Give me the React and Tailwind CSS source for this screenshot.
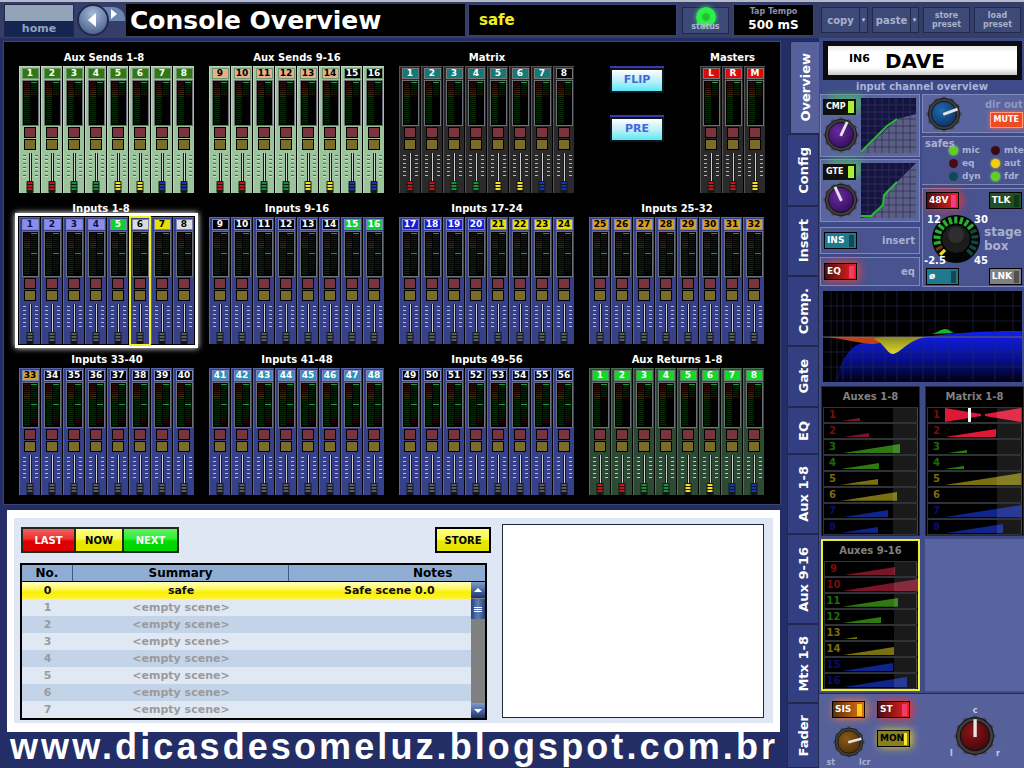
import { useId } from 'react'

const FONT = "font-['DejaVu_Sans',sans-serif]"

const LABELS = {
  green: 'bg-[#2f7a10] text-white',
  peach: 'bg-[#e8b088] text-black',
  black: 'bg-black text-white',
  teal: 'bg-[#117a7a] text-white',
  red: 'bg-[#dd0a0a] text-white',
  peri: 'bg-[#8c8cf0] text-[#101040]',
  lime: 'bg-[#10d030] text-white',
  white: 'bg-[#dcdcdc] text-black',
  yellow: 'bg-[#e8e000] text-black',
  navy: 'bg-[#1a1ad8] text-white',
  orange: 'bg-[#d8a020] text-black',
  sky: 'bg-[#2f8fb8] text-white',
  bright: 'bg-[#12d82c] text-white',
}

const THEMES = {
  green: { strip: 'bg-[#9cc49c] border-[#b8d8b8]', box: 'border-[#6f946f]', tick: 'bg-[repeating-linear-gradient(to_bottom,#4a6a4a_0,#4a6a4a_1px,#c8e0c8_1px,#c8e0c8_2px,transparent_2px,transparent_4px)]' },
  grey: { strip: 'bg-[#2a2a2a] border-[#555555]', box: 'border-[#777777]', tick: 'bg-[repeating-linear-gradient(to_bottom,#b8b8b8_0,#b8b8b8_1px,transparent_1px,transparent_4px)]' },
  blue: { strip: 'bg-[#36418a] border-[#5a65a8]', box: 'border-[#7a84c0]', tick: 'bg-[repeating-linear-gradient(to_bottom,#b0b8e8_0,#b0b8e8_1px,transparent_1px,transparent_4px)]' },
  dark: { strip: 'bg-[#2c4a34] border-[#4f7058]', box: 'border-[#5f8a68]', tick: 'bg-[repeating-linear-gradient(to_bottom,#b8c8b8_0,#b8c8b8_1px,transparent_1px,transparent_4px)]' },
}

const CAPS = {
  red: 'bg-[#c01818]',
  green: 'bg-[#14903a]',
  yellow: 'bg-[#f0e020]',
  blue: 'bg-[#1434b0]',
  none: 'bg-[#555b66]',
}

const SENDS = ['red', 'red', 'green', 'green', 'yellow', 'yellow', 'blue', 'blue']
const NONE = Array(8).fill('none')

function Strip({ label, color, theme, cap, input }) {
  const t = THEMES[theme]
  return (
    <div className={`flex h-[127px] w-[21px] flex-col items-center border-t border-l ${t.strip}`}>
      <div className={`mt-[1px] flex h-[11px] w-[17px] items-center justify-center border text-[9px] leading-none font-bold ${LABELS[color]} ${t.box}`}>
        {label}
      </div>
      <div className="mt-[1px] flex h-[46px] w-[17px] gap-px border border-[#6a6f7a] bg-black p-px">
        <div className="flex-1 bg-[repeating-linear-gradient(to_bottom,transparent_0,transparent_1px,rgba(0,0,0,.8)_1px,rgba(0,0,0,.8)_2px),linear-gradient(to_bottom,#2a0e0a_0,#2a0e0a_12%,#3e3010_32%,#082808_38%,#082808_100%)]" />
        {input ? (
          <div className="flex-1 bg-[linear-gradient(to_bottom,#20a038_0,#20a038_2%,transparent_2%),linear-gradient(to_bottom,transparent_47%,#20a038_47%,#20a038_50%,transparent_50%),repeating-linear-gradient(to_bottom,transparent_0,transparent_1px,rgba(0,0,0,.8)_1px,rgba(0,0,0,.8)_2px),linear-gradient(to_bottom,#061e0a_0,#061e0a_80%,#300a0a_84%,#000000_100%)]" />
        ) : (
          <div className="flex-1 bg-[linear-gradient(to_bottom,#20a038_0,#20a038_3%,transparent_3%),repeating-linear-gradient(to_bottom,transparent_0,transparent_1px,rgba(0,0,0,.8)_1px,rgba(0,0,0,.8)_2px),linear-gradient(to_bottom,#061e0a_0,#061e0a_26%,#301206_30%,#000000_36%,#000000_100%)]" />
        )}
      </div>
      <div className="mt-px h-[11px] w-[12px] border border-black bg-[#7a343c]" />
      <div className="mt-px h-[11px] w-[12px] border border-black bg-[#7c6c2a]" />
      <div className="relative mt-[3px] flex h-[38px] w-full justify-center gap-[3px]">
        <div className={`mt-[2px] h-[24px] w-[3px] ${t.tick}`} />
        <div className="h-full w-[3px] border-x border-[#1a1a1a] bg-[#d0d0d0]" />
        <div className={`mt-[2px] h-[24px] w-[3px] ${t.tick}`} />
        <div className="absolute bottom-[-2px] left-1/2 flex h-[12px] w-[7px] -translate-x-1/2 flex-col gap-px rounded-[1px] bg-[#161616] px-px py-[1px]">
          <div className={`h-[2px] w-full ${CAPS[cap]}`} />
          <div className={`h-[2px] w-full ${CAPS[cap]}`} />
          <div className={`h-[2px] w-full ${CAPS[cap]}`} />
        </div>
      </div>
    </div>
  )
}

function Group({ title, labels, colors, theme, caps, input, selected, titlePad = '' }) {
  return (
    <div className="relative">
      <div className={`mb-px h-[15px] text-center text-[10px] leading-[15px] font-bold text-white ${titlePad}`}>{title}</div>
      <div className="flex gap-px">
        {labels.map((l, i) => (
          <Strip key={l + title} label={l} color={colors[i]} theme={theme} cap={caps[i]} input={input} />
        ))}
      </div>
      {selected && (
        <>
          <div className="pointer-events-none absolute top-[12px] -right-[3px] -bottom-[4px] -left-[4px] border-[3px] border-white shadow-[0_0_6px_#ffffff]" />
          <div className="pointer-events-none absolute top-[15px] bottom-[-2px] left-[110px] w-[22px] border-2 border-[#f0f020]" />
        </>
      )}
    </div>
  )
}

const range = (from, to) => Array.from({ length: to - from + 1 }, (_, i) => String(from + i))
const fill = (c, n = 8) => Array(n).fill(c)

const GROUPS = [
  { title: 'Aux Sends 1-8', labels: range(1, 8), colors: fill('green'), theme: 'green', caps: SENDS, titlePad: 'pr-[6px]' },
  { title: 'Aux Sends 9-16', labels: range(9, 16), colors: [...fill('peach', 6), 'black', 'black'], theme: 'green', caps: SENDS },
  { title: 'Matrix', labels: range(1, 8), colors: [...fill('teal', 7), 'black'], theme: 'grey', caps: SENDS },
]

const INPUTS = [
  { title: 'Inputs 1-8', labels: range(1, 8), colors: [...fill('peri', 4), 'lime', 'white', 'yellow', 'white'], selected: true, titlePad: 'pr-[12px]' },
  { title: 'Inputs 9-16', labels: range(9, 16), colors: [...fill('black', 6), 'lime', 'lime'] },
  { title: 'Inputs 17-24', labels: range(17, 24), colors: [...fill('navy', 4), ...fill('yellow', 4)] },
  { title: 'Inputs 25-32', labels: range(25, 32), colors: fill('orange') },
  { title: 'Inputs 33-40', labels: range(33, 40), colors: ['orange', ...fill('black', 7)] },
  { title: 'Inputs 41-48', labels: range(41, 48), colors: fill('sky') },
  { title: 'Inputs 49-56', labels: range(49, 56), colors: fill('black') },
]

function GlossButton({ children }) {
  return (
    <button className="flex h-[25px] w-[54px] items-center justify-center border-2 border-[#10141c] bg-[linear-gradient(to_bottom,#ffffff_0,#d8f4fa_30%,#bff2f8_50%,#5ce8f4_100%)] text-[11px] font-bold text-[#3f68d8] shadow-[0_-2px_0_#3a38b0]">
      {children}
    </button>
  )
}

function TopButton({ children, split }) {
  return (
    <div className="flex h-[26px] w-[47px] border border-[#20284c] bg-[#3d4a78] text-[#a9b1c9]">
      <div className="flex flex-1 items-center justify-center text-center text-[8px] leading-[9px] font-bold">{children}</div>
      {split && (
        <div className="flex w-[8px] items-center justify-center border-l border-[#20284c] text-[7px] leading-none text-[#c0c6da]">▾</div>
      )}
    </div>
  )
}

function Tab({ label, h, active }) {
  return (
    <div
      className={`flex items-center justify-center rounded-tl-[2px] border border-[#20284c] ${h} ${active ? 'ml-[3px] border-r-0 bg-[#56619c]' : 'bg-[#333f80]'}`}
    >
      <span className="rotate-180 text-[13px] leading-none font-bold text-white [writing-mode:vertical-rl]">{label}</span>
    </div>
  )
}

function Knob({ size, color, dark, angle }) {
  const id = useId()
  const teeth = Array.from({ length: 12 }, (_, i) => i * 30)
  return (
    <svg width={size} height={size} viewBox="0 0 40 40" className="shrink-0">
      <defs>
        <radialGradient id={id} cx="0.4" cy="0.35" r="0.8">
          <stop offset="0" stopColor={color} />
          <stop offset="1" stopColor={dark} />
        </radialGradient>
      </defs>
      {teeth.map((a) => (
        <rect key={a} x="18" y="0.5" width="4" height="5" fill="#4a4a4c" transform={`rotate(${a} 20 20)`} />
      ))}
      <circle cx="20" cy="20" r="17.5" fill="#3e3e40" stroke="#151515" strokeWidth="1" />
      <circle cx="20" cy="20" r="14" fill={`url(#${id})`} stroke="#111111" strokeWidth="1" />
      <rect x="18.5" y="4" width="3.2" height="17" fill="#e4e4e4" transform={`rotate(${angle} 20 20)`} />
    </svg>
  )
}

function Toggle({ label, className, lamp, w = 'w-[33px]', text = 'text-white' }) {
  return (
    <div className={`relative flex h-[17px] ${w} items-center justify-between border border-black px-[2px] text-[9px] font-bold ${className} ${text}`}>
      <span className="leading-none">{label}</span>
      <span className={`h-[12px] w-[5px] ${lamp}`} />
    </div>
  )
}

function Curve({ gray, line }) {
  const lines = [7, 14, 21, 28, 35, 42, 49]
  return (
    <svg width="55" height="55" viewBox="0 0 55 55" className="shrink-0">
      <rect width="55" height="55" fill="#14143c" />
      <polygon points={gray} fill="#5c5f80" />
      {lines.map((v) => (
        <g key={v} stroke="#2e3068" strokeWidth="0.8">
          <line x1={v} y1="0" x2={v} y2="55" />
          <line x1="0" y1={v} x2="55" y2={v} />
        </g>
      ))}
      <polyline points={line} fill="none" stroke="#22c030" strokeWidth="2" />
    </svg>
  )
}

function DynPanel({ label, gray, line, angle }) {
  return (
    <div className="flex h-[63px] items-center gap-[2px] border border-[#7f88b8] bg-[#5a659f] pr-[3px] pl-[2px]">
      <div className="flex w-[36px] flex-col items-center gap-[2px]">
        <div className="flex h-[16px] w-[33px] items-center justify-between self-start bg-[#101010] pr-[2px] pl-[3px] text-[8px] font-bold text-white shadow-[6px_-4px_8px_rgba(60,240,60,.5)]">
          <span>{label}</span>
          <span className="h-[12px] w-[6px] bg-[#a8f030]" />
        </div>
        <Knob size={36} color="#6a2aa0" dark="#2a0a50" angle={angle} />
      </div>
      <Curve gray={gray} line={line} />
    </div>
  )
}

function Led({ className, label }) {
  return (
    <div className="flex items-center gap-[4px]">
      <span className={`h-[9px] w-[9px] rounded-full ${className}`} />
      <span className="text-[9px] leading-none font-bold text-[#aab2d2]">{label}</span>
    </div>
  )
}

function Dial() {
  const segs = Array.from({ length: 17 }, (_, i) => -135 + i * 16.8)
  return (
    <svg width="48" height="48" viewBox="0 0 48 48" className="shrink-0">
      <circle cx="24" cy="24" r="24" fill="#050505" />
      {segs.map((a, i) => (
        <rect
          key={a}
          x="22.4"
          y="1.5"
          width="3.2"
          height="7"
          fill={i === 0 ? '#e8d820' : i === 1 ? '#6a3a10' : i < 12 ? '#28b030' : '#0f4a3c'}
          transform={`rotate(${a} 24 24)`}
        />
      ))}
      <circle cx="24" cy="24" r="14.5" fill="#1c1c1c" stroke="#000000" />
      <circle cx="24" cy="20" r="8" fill="#2e2e2e" />
    </svg>
  )
}

const RED = { num: 'text-[#7a0c0c]', fill: '#7a1428' }
const GRN = { num: 'text-[#1a6a0e]', fill: '#2f7a10' }
const OLV = { num: 'text-[#7a6c10]', fill: '#7a7010' }
const BLU = { num: 'text-[#0c0c6a]', fill: '#10248a' }
const ROW_COLORS = [RED, RED, GRN, GRN, OLV, OLV, BLU, BLU]

function SendRow({ n, w, c, fill, bowtie }) {
  const h = Math.max(2, (w * 12) / 76)
  return (
    <div className="flex h-[16px] border border-[#30323a] bg-black">
      <div className={`w-[17px] shrink-0 text-center text-[10px] leading-[14px] font-bold ${c.num}`}>{n}</div>
      <div className="relative flex-1">
        {bowtie ? (
          <svg width="76" height="14" viewBox="0 0 76 14" className="absolute top-0 left-0">
            <polygon points="0,0 36,6 36,8 0,14" fill="#e01838" />
            <polygon points="76,0 40,6 40,8 76,14" fill="#e01838" />
            <rect x="23" y="0" width="3" height="14" fill="#ffffff" />
          </svg>
        ) : (
          w > 0 && (
            <svg width={w} height={h} className="absolute bottom-px left-0">
              <polygon points={`0,${h} ${w},0 ${w},${h}`} fill={fill || c.fill} />
            </svg>
          )
        )}
        <div className="absolute inset-y-0 left-[52px] w-[25px] bg-white/10" />
      </div>
    </div>
  )
}

function SendPanel({ title, values, start, className, bright }) {
  return (
    <div className={`flex flex-col bg-black px-px ${className}`}>
      <div className="h-[20px] text-center text-[10px] leading-[20px] font-bold text-[#808080]">{title}</div>
      {values.map((w, i) => (
        <SendRow key={i} n={start + i} w={w} c={ROW_COLORS[i]} bowtie={bright && i === 0} fill={bright && i === 1 ? '#e01838' : undefined} />
      ))}
    </div>
  )
}

function EqGraph() {
  const xs = [8, 14, 20, 28, 40, 50, 62, 74, 88, 100, 112, 126, 150, 172, 190]
  const ys = [15, 30, 46, 61, 76]
  return (
    <svg width="199" height="91" viewBox="0 0 199 91" className="block">
      <defs>
        <linearGradient id="eqfill" x1="0" y1="0" x2="0" y2="1">
          <stop offset="0" stopColor="#1020f0" />
          <stop offset="0.55" stopColor="#081090" />
          <stop offset="1" stopColor="#000010" />
        </linearGradient>
        <linearGradient id="dipfill" x1="0" y1="0" x2="0" y2="1">
          <stop offset="0" stopColor="#8a8a20" />
          <stop offset="1" stopColor="#e0d830" />
        </linearGradient>
      </defs>
      <rect width="199" height="91" fill="#000000" />
      <path d="M11 91 C16 80 20 62 34 54 C40 51 46 52 52 50 C70 50 80 47 100 46 C120 44 140 40 199 40 L199 91 Z" fill="url(#eqfill)" />
      {xs.map((x) => (
        <line key={x} x1={x} y1="0" x2={x} y2="91" stroke="#2a2c60" strokeWidth="0.7" opacity="0.8" />
      ))}
      {ys.map((y) => (
        <line key={y} x1="0" y1={y} x2="199" y2={y} stroke="#2a2c60" strokeWidth="0.7" opacity="0.8" />
      ))}
      <path d="M0 46 C20 47 38 53 49 53 C58 53 64 48 72 46 Z" fill="#c04018" />
      <path d="M50 48 C60 50 64 63 70 63 C76 63 86 48 104 46 L60 46 Z" fill="url(#dipfill)" />
      <path d="M109 43 C114 42 118 38 122 38 C126 38 128 41 131 42 Z" fill="#20b030" />
      <line x1="0" y1="46" x2="199" y2="46" stroke="#a08060" strokeWidth="0.8" opacity="0.8" />
    </svg>
  )
}

export default function App() {
  const rows = ['No.', 'Summary', 'Notes']
  return (
    <div className={`flex h-[768px] w-[1024px] flex-col overflow-hidden bg-[#232e66] ${FONT}`}>
      {/* top bar */}
      <div className="flex h-[38px] shrink-0 items-center border-t-2 border-[#b5b9c9] bg-[#343e68]">
        <div className="ml-[4px] flex h-[33px] w-[70px] shrink-0 flex-col border border-[#20284c]">
          <div className="h-[17px] bg-[#93a3b9]" />
          <div className="flex-1 bg-[#14264f] text-center text-[11px] leading-[15px] font-bold text-[#8fa3c0]">home</div>
        </div>
        <div className="relative ml-[3px] h-[32px] w-[49px] shrink-0">
          <div className="absolute top-[3px] left-[24px] flex h-[14px] w-[24px] items-center rounded-tr-[12px] bg-[#6d86b0] pl-[10px]">
            <span className="h-0 w-0 border-y-[5px] border-l-[6px] border-y-transparent border-l-white" />
          </div>
          <div className="absolute top-0 left-0 flex h-[32px] w-[32px] items-center justify-center rounded-full border-2 border-[#20284c] bg-[radial-gradient(circle_at_50%_30%,#a8bad6,#37507e)]">
            <span className="mr-[3px] h-0 w-0 border-y-[7px] border-r-[8px] border-y-transparent border-r-white" />
          </div>
        </div>
        <div className="flex h-[32px] w-[339px] shrink-0 items-center bg-black pl-[4px] text-[25px] leading-none font-bold text-white">
          Console Overview
        </div>
        <div className="ml-[3px] flex h-[32px] w-[209px] shrink-0 items-center border border-[#3a4470] bg-black pl-[10px] text-[15px] font-bold text-[#f0f020]">
          safe
        </div>
        <div className="relative ml-[5px] flex h-[27px] w-[47px] shrink-0 items-end justify-center border border-[#20284c] bg-[#3d4a78] pb-[2px] text-[8px] leading-none font-bold text-[#b0b8d0]">
          <span className="absolute -top-[1px] left-1/2 h-[20px] w-[20px] -translate-x-1/2 rounded-full bg-[radial-gradient(circle,#22c030_0,#22c030_20%,#2cf04a_35%,#30f050_100%)] shadow-[0_0_4px_#30f050]" />
          <span className="relative">status</span>
        </div>
        <div className="ml-[4px] flex h-[32px] w-[81px] shrink-0 flex-col items-center justify-center border border-[#3a4470] bg-black font-bold">
          <span className="text-[8px] leading-[11px] text-[#8a90a8]">Tap Tempo</span>
          <span className="text-[12px] leading-[17px] text-white">500 mS</span>
        </div>
        <div className="ml-[7px] flex gap-[4px]">
          <TopButton split>
            <span className="text-[10px]">copy</span>
          </TopButton>
          <TopButton split>
            <span className="text-[10px]">paste</span>
          </TopButton>
          <TopButton>
            store
            <br />
            preset
          </TopButton>
          <TopButton>
            load
            <br />
            preset
          </TopButton>
        </div>
      </div>

      <div className="flex min-h-0 flex-1">
        {/* overview and scenes */}
        <div className="flex w-[787px] shrink-0 flex-col pt-[3px]">
          <div className="ml-[3px] h-[464px] w-[778px] border border-[#3a4470] bg-black pt-[8px] pl-[15px]">
            <div className="grid grid-cols-[176px_176px_176px_176px] gap-x-[14px] gap-y-[8px]">
              {GROUPS.map((g) => (
                <Group key={g.title} {...g} />
              ))}
              <div className="flex items-start">
                <div className="ml-[21px] flex flex-col gap-[24px] pt-[18px]">
                  <GlossButton>FLIP</GlossButton>
                  <GlossButton>PRE</GlossButton>
                </div>
                <div className="ml-[36px]">
                  <Group title="Masters" labels={['L', 'R', 'M']} colors={fill('red', 3)} theme="grey" caps={['red', 'red', 'yellow']} />
                </div>
              </div>
              {INPUTS.map((g) => (
                <Group key={g.title} {...g} theme="blue" caps={NONE} input />
              ))}
              <Group title="Aux Returns 1-8" labels={range(1, 8)} colors={fill('bright')} theme="dark" caps={SENDS} />
            </div>
          </div>

          <div className="mt-[5px] ml-[7px] flex h-[222px] w-[773px] shrink-0 gap-[15px] border-x-[7px] border-t-[8px] border-b-[9px] border-white bg-[#dfe7f4] pt-[9px] pl-[6px]">
            <div className="flex w-[467px] flex-col">
              <div className="flex justify-between">
                <div className="ml-px flex h-[26px] border-2 border-[#202820]">
                  <div className="flex w-[51px] items-center justify-center bg-[linear-gradient(to_bottom,#f06060_0,#ee3030_45%,#e00000_55%,#dd0000_100%)] text-[10px] font-bold text-white">LAST</div>
                  <div className="flex w-[50px] items-center justify-center border-x-2 border-[#202820] bg-[linear-gradient(to_bottom,#ffff80_0,#f8f850_45%,#e8e800_55%,#e4e400_100%)] text-[10px] font-bold text-black">NOW</div>
                  <div className="flex w-[53px] items-center justify-center bg-[linear-gradient(to_bottom,#60f060_0,#30ee30_45%,#00d800_55%,#00d400_100%)] text-[10px] font-bold text-white">NEXT</div>
                </div>
                <div className="mr-[-4px] flex h-[26px] w-[56px] items-center justify-center border-2 border-black bg-[linear-gradient(to_bottom,#ffff80_0,#f8f850_45%,#e8e800_55%,#e4e400_100%)] text-[10px] font-bold text-black">STORE</div>
              </div>
              <div className="mt-[10px] border-2 border-black">
                <div className="flex h-[17px] border-b border-black bg-[#8fadd3] text-[12px] leading-[17px] font-bold text-black">
                  <div className="w-[51px] border-r border-[#3a5a8a] text-center">{rows[0]}</div>
                  <div className="w-[216px] border-r border-[#3a5a8a] text-center">{rows[1]}</div>
                  <div className="flex-1 pl-[124px]">{rows[2]}</div>
                </div>
                <div className="flex">
                  <div className="flex-1">
                    <div className="flex h-[17px] bg-[linear-gradient(to_bottom,#ffffc0_0,#fff860_40%,#f8f000_60%,#fff040_100%)] text-[11px] leading-[17px] font-bold text-[#101010]">
                      <div className="w-[51px] text-center">0</div>
                      <div className="w-[216px] text-center">safe</div>
                      <div className="flex-1 pl-[55px]">Safe scene 0.0</div>
                    </div>
                    {[1, 2, 3, 4, 5, 6, 7].map((n) => (
                      <div
                        key={n}
                        className={`flex h-[17px] text-[11px] leading-[17px] font-bold text-[#9a9a9a] ${n % 2 ? 'bg-[#e0e8f4]' : 'bg-[#c4d4e8]'}`}
                      >
                        <div className="w-[51px] text-center">{n}</div>
                        <div className="w-[216px] text-center">&lt;empty scene&gt;</div>
                      </div>
                    ))}
                  </div>
                  <div className="flex w-[14px] flex-col bg-[#808080]">
                    <div className="flex h-[16px] items-center justify-center bg-[linear-gradient(to_bottom,#7f9ccc,#1c3470)]">
                      <span className="h-0 w-0 border-x-[4px] border-b-[4px] border-x-transparent border-b-white" />
                    </div>
                    <div className="mt-[1px] flex h-[20px] flex-col items-center justify-center gap-[1px] bg-[linear-gradient(to_right,#27407c,#5f7fb8,#27407c)]">
                      <span className="h-px w-[8px] bg-white" />
                      <span className="h-px w-[8px] bg-white" />
                      <span className="h-px w-[8px] bg-white" />
                    </div>
                    <div className="flex-1" />
                    <div className="flex h-[15px] items-center justify-center bg-[linear-gradient(to_bottom,#7f9ccc,#1c3470)]">
                      <span className="h-0 w-0 border-x-[4px] border-t-[4px] border-x-transparent border-t-white" />
                    </div>
                  </div>
                </div>
              </div>
            </div>
            <div className="mt-[-3px] h-[194px] w-[262px] border border-[#202840] bg-white" />
          </div>

          <div className="pl-[10px] text-[36px] leading-[30px] font-bold tracking-[3.1px] whitespace-nowrap text-white font-['Liberation_Sans',sans-serif]">
            www.dicasdesomeluz.blogspot.com.br
          </div>
        </div>

        {/* vertical tabs */}
        <div className="flex w-[32px] shrink-0 flex-col pt-[3px]">
          <Tab label="Overview" h="h-[93px]" active />
          <Tab label="Config" h="h-[72px]" />
          <Tab label="Insert" h="h-[70px]" />
          <Tab label="Comp." h="h-[70px]" />
          <Tab label="Gate" h="h-[61px]" />
          <Tab label="EQ" h="h-[47px]" />
          <Tab label="Aux 1-8" h="h-[80px]" />
          <Tab label="Aux 9-16" h="h-[90px]" />
          <Tab label="Mtx 1-8" h="h-[79px]" />
          <Tab label="Fader" h="h-[65px]" />
        </div>

        {/* channel panel */}
        <div className="flex w-[205px] shrink-0 flex-col bg-[#3f4a88] pt-[3px] pl-px">
          <div className="ml-[3px] flex h-[39px] w-[199px] items-center border-[5px] border-[#0c0c10] bg-[linear-gradient(to_bottom,#e8e8e8_0,#ffffff_20%,#ffffff_75%,#c8c8c8_100%)] pl-[21px] font-bold text-black">
            <span className="mb-[2px] text-[11px]">IN6</span>
            <span className="ml-[15px] text-[20px] leading-none">DAVE</span>
          </div>
          <div className="h-[14px] text-center text-[10px] leading-[14px] font-bold text-[#a8b4d8]">input channel overview</div>
          <div className="flex w-[202px] gap-[2px]">
            <div className="flex w-[100px] shrink-0 flex-col gap-[2px]">
              <DynPanel label="CMP" gray="0,55 36,21 55,16 55,55" line="0,54 12,42 26,28 36,21" angle={25} />
              <DynPanel label="GTE" gray="0,55 10,53 22,42 23,32 36,19 55,0 55,55" line="0,53 10,53 22,42 23,32 36,19" angle={-25} />
              <div className="mt-[3px] flex h-[27px] items-center justify-between border border-[#7f88b8] bg-[#48538f] pr-[4px] pl-[3px]">
                <Toggle label="INS" className="bg-[#1f7a90]" lamp="bg-[#124858]" />
                <span className="text-[10px] font-bold text-[#a8b0d0]">insert</span>
              </div>
              <div className="mt-px flex h-[29px] items-center justify-between border border-[#7f88b8] bg-[#48538f] pr-[4px] pl-[3px]">
                <Toggle label="EQ" className="bg-[linear-gradient(to_right,#4a1010,#f02020)] shadow-[2px_0_10px_#ff4030]" lamp="bg-[#f03c6c]" />
                <span className="text-[10px] font-bold text-[#a8b0d0]">eq</span>
              </div>
            </div>
            <div className="flex flex-1 flex-col gap-[3px]">
              <div className="flex h-[39px] items-center border border-[#7f88b8] bg-[#5a659f] pr-[2px] pl-[3px]">
                <Knob size={36} color="#1f6ab0" dark="#0a2a58" angle={70} />
                <div className="flex flex-1 flex-col items-end gap-[2px]">
                  <span className="text-[10px] leading-none font-bold text-[#8f98c4]">dir out</span>
                  <span className="flex h-[16px] w-[33px] items-center justify-center border border-[#ff9a80] bg-[#f04a20] text-[8px] leading-none font-bold text-white shadow-[0_0_4px_#ff6a4a]">MUTE</span>
                </div>
              </div>
              <div className="relative h-[49px] border-y border-[#7f88b8] bg-[#48538f]">
                <span className="absolute top-0 left-[3px] text-[10px] leading-[13px] font-bold text-[#aab2d2]">safes</span>
                <div className="grid grid-cols-[42px_auto] gap-y-[4px] pt-[9px] pl-[27px]">
                  <Led className="bg-[#60d020] shadow-[0_0_3px_#90f060]" label="mic" />
                  <Led className="bg-[#3a0a10]" label="mte" />
                  <Led className="bg-[#4a0a10]" label="eq" />
                  <Led className="bg-[#f0d010] shadow-[0_0_3px_#f0d010]" label="aut" />
                  <Led className="bg-[#0f4a50]" label="dyn" />
                  <Led className="bg-[#60d020] shadow-[0_0_3px_#90f060]" label="fdr" />
                </div>
              </div>
              <div className="flex h-[99px] flex-col border border-[#7f88b8] bg-[#48538f] px-[3px] pt-[3px]">
                <div className="flex justify-between">
                  <Toggle label="48V" className="bg-[linear-gradient(to_right,#4a1010,#f02020)] shadow-[2px_0_10px_#ff3030]" lamp="bg-[#f03c8c]" />
                  <Toggle label="TLK" className="bg-[#1f5028]" lamp="bg-[#103818]" />
                </div>
                <div className="relative mt-[5px] flex h-[50px] items-center pl-[6px]">
                  <Dial />
                  <span className="ml-[4px] text-[12px] leading-[14px] font-bold text-[#a8b0d0]">
                    stage
                    <br />
                    box
                  </span>
                  <span className="absolute top-[-2px] left-[1px] text-[10px] font-bold text-white">12</span>
                  <span className="absolute top-[-2px] left-[48px] text-[10px] font-bold text-white">30</span>
                  <span className="absolute bottom-[-4px] left-[-2px] text-[10px] font-bold text-white">-2.5</span>
                  <span className="absolute bottom-[-4px] left-[48px] text-[10px] font-bold text-white">45</span>
                </div>
                <div className="mt-[4px] flex justify-between">
                  <Toggle label="ø" className="bg-[#1f7a90]" lamp="bg-[#124858]" />
                  <Toggle label="LNK" className="bg-[#808080]" lamp="bg-[#505050]" />
                </div>
              </div>
            </div>
          </div>

          <div className="mt-[4px] ml-[3px]">
            <EqGraph />
          </div>

          <div className="mt-[4px] flex gap-[5px] pl-px">
            <div className="flex w-[99px] flex-col gap-[3px]">
              <SendPanel title="Auxes 1-8" values={[19, 28, 59, 38, 37, 56, 47, 37]} start={1} className="border border-[#20284c]" />
              <SendPanel title="Auxes 9-16" values={[53, 76, 56, 39, 15, 52, 51, 65]} start={9} className="h-[152px] border-2 border-[#f0f020]" />
            </div>
            <div className="flex flex-1 flex-col gap-[3px]">
              <SendPanel title="Matrix 1-8" values={[76, 51, 22, 19, 76, 0, 76, 58]} start={1} bright className="h-[150px] border border-[#20284c]" />
              <div className="-mr-px flex-1 bg-[#5864a0]" />
            </div>
          </div>

          <div className="mt-[2px] -ml-px flex flex-1 border-t border-[#20284c] bg-[#56619c] pt-[7px] pl-[13px]">
            <div className="flex w-[33px] flex-col items-center">
              <Toggle label="SIS" className="bg-[linear-gradient(to_right,#5a3010,#e07010)] shadow-[2px_0_8px_#ff8030]" lamp="bg-[#f8d010]" />
              <div className="mt-[8px]">
                <Knob size={32} color="#8a5a18" dark="#4a2a08" angle={75} />
              </div>
              <div className="flex w-[44px] justify-between text-[8px] leading-[9px] font-bold text-[#a8b0d0]">
                <span>st</span>
                <span>lcr</span>
              </div>
            </div>
            <div className="ml-[12px] flex w-[33px] flex-col">
              <Toggle label="ST" className="bg-[linear-gradient(to_right,#4a1010,#f02020)] shadow-[2px_0_8px_#ff3030]" lamp="bg-[#f03c6c]" />
              <div className="mt-[12px]">
                <Toggle label="MON" text="text-black" className="bg-[#8a8018] shadow-[2px_0_8px_#e8d020]" lamp="bg-[#f8e830]" />
              </div>
            </div>
            <div className="mt-[5px] ml-[42px] flex w-[46px] flex-col items-center">
              <span className="text-[8px] leading-[9px] font-bold text-[#c8cee4]">c</span>
              <Knob size={42} color="#8a1418" dark="#3a0608" angle={0} />
              <div className="-mt-[8px] flex w-[50px] justify-between text-[8px] leading-[9px] font-bold text-[#c8cee4]">
                <span>l</span>
                <span>r</span>
              </div>
            </div>
          </div>
        </div>
      </div>
    </div>
  )
}
